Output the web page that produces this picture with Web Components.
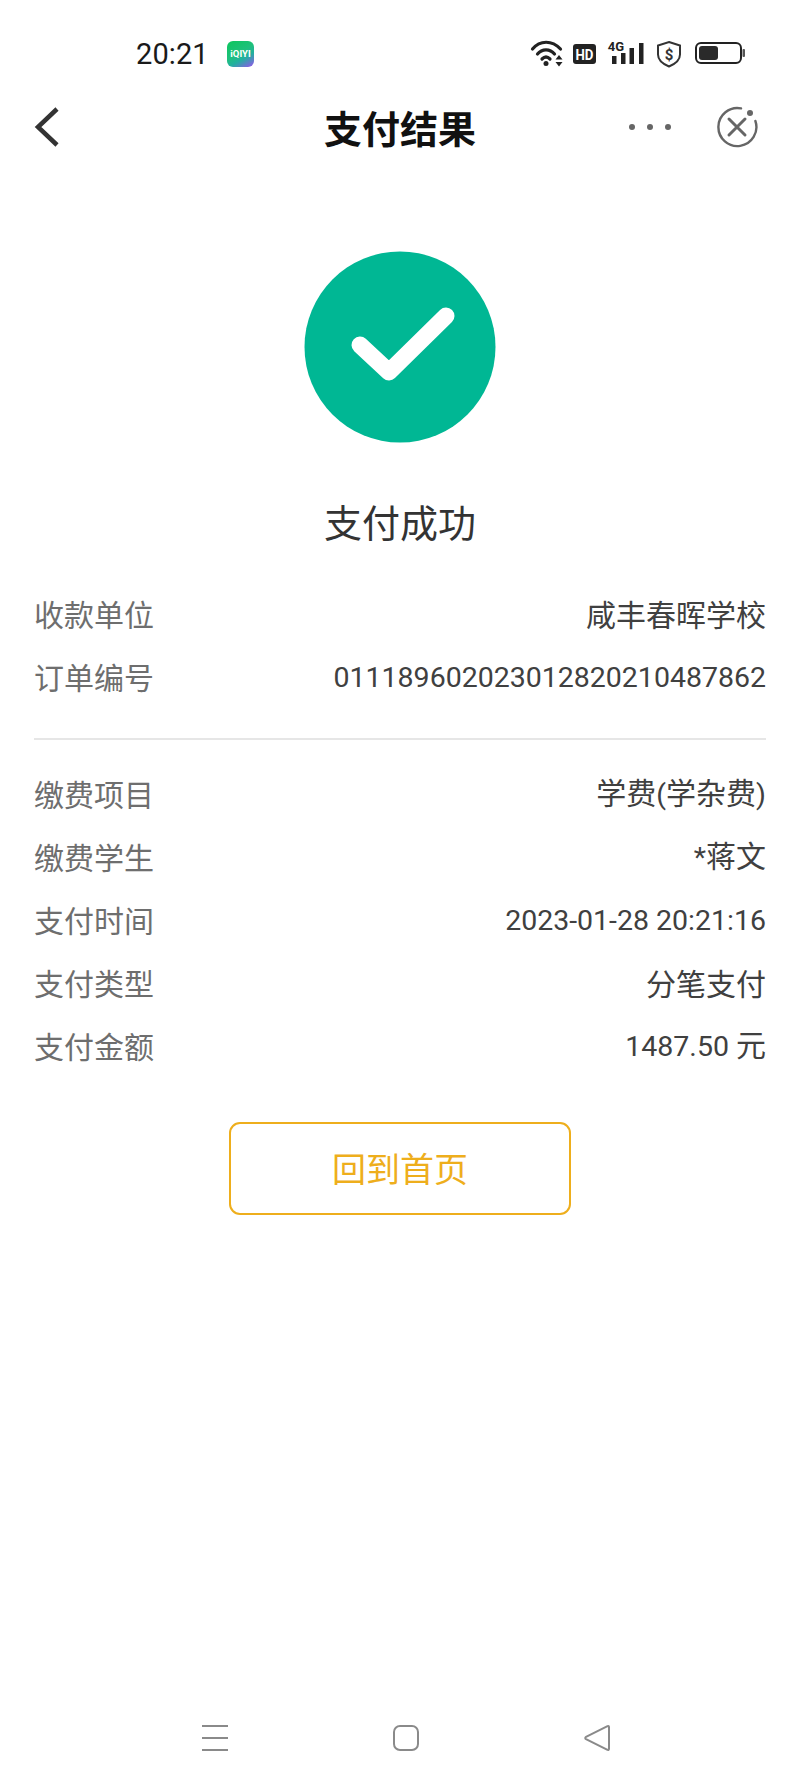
<!DOCTYPE html>
<html lang="zh-CN">
<head>
<meta charset="UTF-8">
<title>支付结果</title>
<style>
    html,body{margin:0;padding:0;background:#fff;}
    body{width:800px;height:1787px;overflow:hidden;font-family:"Noto Sans CJK SC","Noto Sans",sans-serif;}
    pay-app{height:1787px;}
</style>
<script type="module">
    class StatusBar extends HTMLElement {
        constructor() {
            super();
            let shadow = this.attachShadow({mode:'open'});
            shadow.innerHTML = `<style>
                :host{display:flex;align-items:center;height:48px;padding:30px 0 0 136px;box-sizing:content-box;}
                .time{font:400 29px/48px Roboto,"Noto Sans",sans-serif;color:#1a1a1a;width:91px;letter-spacing:.1px;}
                .app{width:27px;height:26px;border-radius:6px;background:linear-gradient(150deg,#0cc65c 0%,#1fc07c 45%,#22b0a0 65%,#9a50f0 100%);color:#fff;
                    font:700 9.500px/26px Roboto,sans-serif;text-align:center;}
                .icons{margin-left:auto;margin-right:54px;}
                svg{display:block;}
            </style>
            <span class="time">20:21</span>
            <span class="app">iQIYI</span>
            <svg class="icons" width="216" height="30" viewBox="0 0 216 30">
                <g fill="none" stroke="#222" stroke-width="3.200" stroke-linecap="round">
                    <path d="M2.500 10C10 1 22 1 30.500 10"/>
                    <path d="M7.500 15C12 9.500 20 9.500 24.500 15"/>
                    <path d="M12 20C14.500 17.500 17.500 17.500 20 20"/>
                </g>
                <circle cx="16" cy="24.500" r="2.500" fill="#222"/>
                <path d="M25.500 20.500l3.500-4.500 3.500 4.500zM25.500 23l3.500 4.500 3.500-4.500z" fill="#222"/>
                <rect x="43" y="5" width="23" height="20" rx="3" fill="#222"/>
                <text x="54.500" y="20.500" font-family="Roboto,sans-serif" font-weight="700" font-size="15" fill="#fff" text-anchor="middle" textLength="18" lengthAdjust="spacingAndGlyphs">HD</text>
                <text x="86" y="12" font-family="Roboto,sans-serif" font-weight="700" font-size="13" fill="#222" text-anchor="middle">4G</text>
                <g fill="#222">
                    <rect x="82" y="17" width="4.500" height="8"/>
                    <rect x="91" y="14" width="4.500" height="11"/>
                    <rect x="99.500" y="9" width="4.500" height="16"/>
                    <rect x="109" y="4" width="4.500" height="21"/>
                </g>
                <path d="M139 3l11 3.500v9c0 6-5 9.500-11 12c-6-2.500-11-6-11-12v-9z" fill="none" stroke="#333" stroke-width="2"/>
                <text x="139" y="21" font-family="Roboto,sans-serif" font-weight="700" font-size="15" fill="#333" text-anchor="middle">$</text>
                <rect x="166" y="4" width="45" height="20" rx="5" fill="none" stroke="#222" stroke-width="2"/>
                <rect x="169" y="7" width="19" height="14" rx="3" fill="#2a2a2a"/>
                <rect x="212.500" y="10" width="2.500" height="8" rx="1" fill="#555"/>
            </svg>`;
        }
    }
    window.customElements.define('status-bar', StatusBar);

    class NavBar extends HTMLElement {
        constructor() {
            super();
            let shadow = this.attachShadow({mode:'open'});
            shadow.innerHTML = `<style>
                :host{display:flex;align-items:center;justify-content:space-between;height:74px;padding:0 42px 0 34px;margin-top:12px;position:relative;}
                .title{position:absolute;left:0;right:0;text-align:center;font-size:38px;font-weight:700;line-height:74px;color:#111;}
                .right{display:flex;align-items:center;gap:44px;position:relative;}
                svg{display:block;}
            </style>
            <svg width="26" height="40" viewBox="0 0 26 40"><path d="M23 2L4 20l19 18" fill="none" stroke="#333" stroke-width="4.500"/></svg>
            <span class="title"><slot></slot></span>
            <span class="right">
                <svg width="44" height="8" viewBox="0 0 44 8" fill="#666"><circle cx="4" cy="4" r="3"/><circle cx="22" cy="4" r="3"/><circle cx="40" cy="4" r="3"/></svg>
                <svg width="42" height="42" viewBox="0 0 42 42">
                    <path d="M25 2.400A19 19 0 1 0 39.400 15" fill="none" stroke="#666" stroke-width="2.400" stroke-linecap="round"/>
                    <circle cx="34" cy="7" r="3" fill="#666"/>
                    <path d="M13 13l16 16M29 13L13 29" stroke="#666" stroke-width="3" stroke-linecap="round"/>
                </svg>
            </span>`;
        }
    }
    window.customElements.define('nav-bar', NavBar);

    class ResultHead extends HTMLElement {
        constructor() {
            super();
            let shadow = this.attachShadow({mode:'open'});
            shadow.innerHTML = `<style>
                :host{display:flex;flex-direction:column;align-items:center;padding-top:87px;}
                svg{display:block;}
                .msg{font-size:38px;line-height:56px;color:#333;margin-top:50px;}
            </style>
            <svg width="192" height="192" viewBox="0 0 192 192">
                <circle cx="96" cy="96" r="95.500" fill="#00b794"/>
                <path d="M56 94l29 27 57-56" fill="none" stroke="#fff" stroke-width="17" stroke-linecap="round" stroke-linejoin="round"/>
            </svg>
            <span class="msg"><slot></slot></span>`;
        }
    }
    window.customElements.define('result-head', ResultHead);

    // latin and digits run narrower than the CJK text beside them
    class NumText extends HTMLElement {
        constructor() {
            super();
            let shadow = this.attachShadow({mode:'open'});
            shadow.innerHTML = `<style>
                :host{display:inline;font-family:Roboto,sans-serif;font-size:28.500px;}
            </style><slot></slot>`;
        }
    }
    window.customElements.define('num-text', NumText);

    class InfoRow extends HTMLElement {
        constructor() {
            super();
            let shadow = this.attachShadow({mode:'open'});
            shadow.innerHTML = `<style>
                :host{display:flex;justify-content:space-between;align-items:center;height:63px;font-size:30px;}
                .k{color:#6e6e6e;}
                .v{color:#404040;font-size:30px;line-height:40px;}
            </style>
            <span class="k"></span><span class="v"><slot></slot></span>`;
            this.labelEl = shadow.querySelector('.k');
        }
        connectedCallback() {
            this.labelEl.textContent = this.getAttribute('label');
        }
    }
    window.customElements.define('info-row', InfoRow);

    class InfoList extends HTMLElement {
        constructor() {
            super();
            let shadow = this.attachShadow({mode:'open'});
            shadow.innerHTML = `<style>
                :host{display:block;margin:0 34px;}
                :host([divided]){border-bottom:2px solid #e6e6e6;padding-bottom:31px;margin-bottom:21px;}
            </style><slot></slot>`;
        }
    }
    window.customElements.define('info-list', InfoList);

    class HomeButton extends HTMLElement {
        constructor() {
            super();
            let shadow = this.attachShadow({mode:'open'});
            shadow.innerHTML = `<style>
                :host{display:flex;justify-content:center;align-items:center;box-sizing:border-box;width:342px;height:93px;margin:46px auto 0;padding-bottom:3px;
                    border:2px solid #eeae1c;border-radius:11px;color:#eeae1c;font-size:34px;font-weight:400;}
            </style><slot></slot>`;
        }
    }
    window.customElements.define('home-button', HomeButton);

    class SystemNav extends HTMLElement {
        constructor() {
            super();
            let shadow = this.attachShadow({mode:'open'});
            shadow.innerHTML = `<style>
                :host{display:flex;justify-content:space-between;align-items:center;padding:0 190px 0 202px;height:26px;position:absolute;left:0;right:0;top:1725px;}
                svg{display:block;}
            </style>
            <svg width="26" height="26" viewBox="0 0 26 26"><path d="M0 1h26M0 13h26M0 25h26" stroke="#8a8a8a" stroke-width="2"/></svg>
            <svg width="26" height="26" viewBox="0 0 26 26"><rect x="1" y="1" width="24" height="24" rx="6" fill="none" stroke="#8a8a8a" stroke-width="2"/></svg>
            <svg width="26" height="26" viewBox="0 0 26 26"><path d="M23.500 1.200L2 11.800c-1 .6-1 1.800 0 2.400l21.500 10.600c1 .3 1.500 0 1.500-1V2.200c0-1-.5-1.300-1.500-1z" fill="none" stroke="#8a8a8a" stroke-width="2" stroke-linejoin="round"/></svg>`;
        }
    }
    window.customElements.define('system-nav', SystemNav);

    class PayApp extends HTMLElement {
        constructor() {
            super();
            let shadow = this.attachShadow({mode:'open'});
            shadow.innerHTML = `<style>
                :host{display:block;position:relative;}
            </style><slot></slot>`;
        }
    }
    window.customElements.define('pay-app', PayApp);
</script>
</head>
<body>
<pay-app>
    <status-bar></status-bar>
    <nav-bar>支付结果</nav-bar>
    <result-head>支付成功</result-head>
    <info-list divided style="margin-top:32px">
        <info-row label="收款单位">咸丰春晖学校</info-row>
        <info-row label="订单编号"><num-text>011189602023012820210487862</num-text></info-row>
    </info-list>
    <info-list>
        <info-row label="缴费项目">学费<num-text>(</num-text>学杂费<num-text>)</num-text></info-row>
        <info-row label="缴费学生"><num-text>*</num-text>蒋文</info-row>
        <info-row label="支付时间"><num-text>2023-01-28 20:21:16</num-text></info-row>
        <info-row label="支付类型">分笔支付</info-row>
        <info-row label="支付金额"><num-text>1487.50 </num-text>元</info-row>
    </info-list>
    <home-button>回到首页</home-button>
    <system-nav></system-nav>
</pay-app>
</body>
</html>
